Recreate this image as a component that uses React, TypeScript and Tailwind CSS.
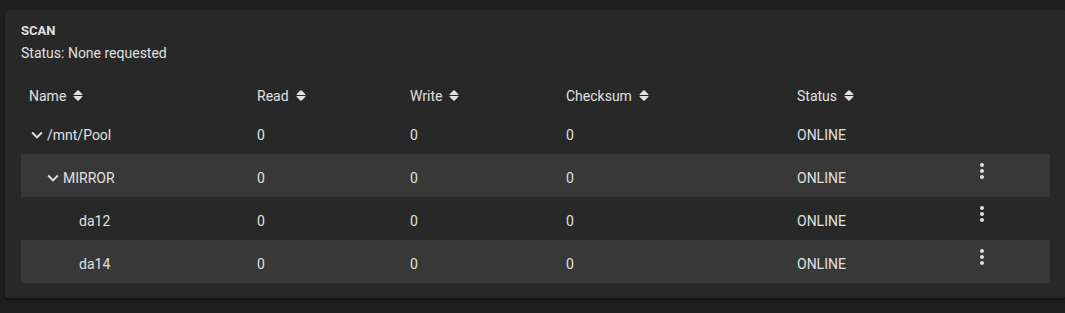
import React from 'react'

type DiskRow = {
  name: string
  level: number
  expandable: boolean
  read: number
  write: number
  checksum: number
  status: string
  actions: boolean
}

const rows: DiskRow[] = [
  { name: '/mnt/Pool', level: 0, expandable: true, read: 0, write: 0, checksum: 0, status: 'ONLINE', actions: false },
  { name: 'MIRROR', level: 1, expandable: true, read: 0, write: 0, checksum: 0, status: 'ONLINE', actions: true },
  { name: 'da12', level: 2, expandable: false, read: 0, write: 0, checksum: 0, status: 'ONLINE', actions: true },
  { name: 'da14', level: 2, expandable: false, read: 0, write: 0, checksum: 0, status: 'ONLINE', actions: true },
]

const columns = ['Name', 'Read', 'Write', 'Checksum', 'Status']

// name | read | write | checksum | status | actions
const gridCols = 'grid grid-cols-[228px_153px_156px_231px_173px_1fr]'

const SortIcon = () => {
  return (
    <svg viewBox="0 0 10 11" className="h-[11px] w-[10px] fill-[#e0e0e0] -mt-[2px] shrink-0">
      <path d="M4.3 0.6a1 1 0 0 1 1.4 0L9.4 4.2c0.4 0.4 0.1 0.9-0.4 0.9H1c-0.5 0-0.8-0.5-0.4-0.9z" />
      <path d="M4.3 10.4a1 1 0 0 0 1.4 0L9.4 6.8c0.4-0.4 0.1-0.9-0.4-0.9H1c-0.5 0-0.8 0.5-0.4 0.9z" />
    </svg>
  )
}

const ChevronDown = () => {
  return (
    <svg viewBox="0 0 24 24" className="h-[22px] w-[22px] fill-[#e0e0e0] -ml-[3px] -mr-[1px] shrink-0">
      <path d="M7.41 8.59 12 13.17l4.59-4.58L18 10l-6 6-6-6 1.41-1.41z" />
    </svg>
  )
}

const MoreVert = () => {
  return (
    <svg viewBox="0 0 24 24" className="h-6 w-6 fill-[#e0e0e0] -mt-[9px]">
      <path d="M12 8c1.1 0 2-.9 2-2s-.9-2-2-2-2 .9-2 2 .9 2 2 2zm0 2c-1.1 0-2 .9-2 2s.9 2 2 2 2-.9 2-2-.9-2-2-2zm0 6c-1.1 0-2 .9-2 2s.9 2 2 2 2-.9 2-2-.9-2-2-2z" />
    </svg>
  )
}

const Cell = (props: { children: React.ReactNode }) => {
  return <div className="flex items-center px-2 pt-[5px]">{props.children}</div>
}

const App = () => {
  return (
    <div className="min-h-[313px] w-[1065px] overflow-hidden bg-[#1e1e1e] pt-[10px] pl-[5px] text-[14px] text-[#e0e0e0] font-['Roboto',sans-serif]">
      <div className="w-[1061px] rounded-[4px] bg-[#282828] px-4 pt-[13px] pb-[15px] shadow-[0_2px_3px_rgba(0,0,0,0.35)]">
        <div className="text-[13px] font-bold leading-4">SCAN</div>
        <div className="mt-[5px] leading-[18px]">Status: None requested</div>

        <div className={`${gridCols} mt-4 h-[33px]`}>
          {columns.map(col => (
            <div key={col} className="flex items-center gap-[7px] px-2 pt-[3px]">
              <span>{col}</span>
              <SortIcon />
            </div>
          ))}
          <div></div>
        </div>

        {rows.map((row, i) => (
          <div key={row.name} className={`${gridCols} h-[43px] ${i % 2 === 1 ? 'bg-[#383838]' : ''}`}>
            <Cell>
              <div className="flex items-center" style={{ paddingLeft: row.level * 16 }}>
                {row.expandable ? <ChevronDown /> : null}
                {/* leaves keep the chevron's slot so names line up */}
                <span className={row.expandable ? '' : 'pl-[18px]'}>{row.name}</span>
              </div>
            </Cell>
            <Cell>{row.read}</Cell>
            <Cell>{row.write}</Cell>
            <Cell>{row.checksum}</Cell>
            <Cell>{row.status}</Cell>
            <div className="flex items-center px-2">{row.actions ? <MoreVert /> : null}</div>
          </div>
        ))}
      </div>
    </div>
  )
}

export default App
